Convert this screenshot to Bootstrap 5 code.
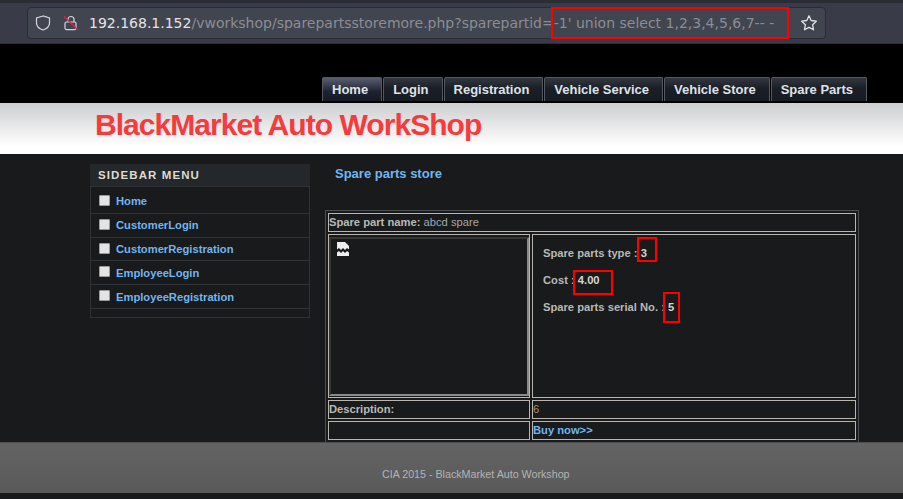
<!DOCTYPE html>
<html lang="en">
  <head>
    <meta charset="UTF-8" />
    <meta name="viewport" content="width=device-width, initial-scale=1.0" />
    <title>BlackMarket Auto WorkShop</title>
    <link
      href="https://cdn.jsdelivr.net/npm/bootstrap@5.3.0/dist/css/bootstrap.min.css"
      rel="stylesheet"
    />
    <script src="https://cdn.jsdelivr.net/npm/bootstrap@5.3.0/dist/js/bootstrap.bundle.min.js"></script>
    <style>
      body {
        background: #181a1c;
        color: #b9b9b4;
        font-family: "Liberation Sans", Arial, sans-serif;
        font-size: 11.2px;
        height: 499px;
        overflow: hidden;
        position: relative;
      }
      a {
        color: #72b5f0;
        text-decoration: none;
        font-weight: 700;
      }
      .browser-bar {
        height: 44px;
        background: #393c48;
        border-top: 3px solid #2b2d36;
        border-bottom: 1px solid #2b2d36;
        padding: 4px 0 0 27px;
      }
      .url-box {
        width: 799px;
        height: 32px;
        background: #41454f;
        border: 1px solid #2a2c35;
        border-radius: 4px;
        font-family: "DejaVu Sans", sans-serif;
        font-size: 14px;
        color: #8b8d96;
        white-space: nowrap;
      }
      .url-host {
        color: #e4e4e8;
      }
      .shield-icon {
        margin-left: 7px;
      }
      .lock-icon {
        margin-left: 12px;
        margin-right: 10px;
      }
      .star-icon {
        margin-left: 26px;
      }
      .top-strip {
        height: 59px;
        background: #000;
        padding: 33px 0 0 322px;
      }
      .tab-link {
        display: block;
        height: 24px;
        margin-right: 1px;
        padding: 0 13px 0 9px;
        line-height: 23px;
        font-size: 13px;
        color: #dfe3e8;
        background: linear-gradient(#33373f, #1a1e26 45%, #171b22);
        border: 1px solid #555a62;
        border-bottom: 0;
        border-radius: 2px 2px 0 0;
      }
      .tab-link.active {
        background: linear-gradient(#5a5f70, #1c2230 60%, #171b25);
      }
      .title-band {
        height: 51px;
        background: linear-gradient(#cdced0, #fff 85%);
        padding-left: 95px;
      }
      .title-band h1 {
        margin: 0;
        color: #f83a3c;
        font-family: "Liberation Sans", sans-serif;
        font-size: 30px;
        font-weight: 700;
        line-height: 44px;
        letter-spacing: -0.95px;
      }
      .page-body {
        height: 288px;
        padding: 10px 0 0 90px;
      }
      .side-menu {
        width: 220px;
        height: 154px;
        padding-top: 3px;
        border: 1px solid #303335;
        border-top: 0;
      }
      .side-title {
        height: 23px;
        margin: -3px -1px 3px;
        padding-left: 8px;
        background: #25282a;
        border-bottom: 1px solid #303335;
        color: #dcdcd6;
        font-size: 11.5px;
        font-weight: 700;
        line-height: 22px;
        letter-spacing: 1.1px;
      }
      .side-item {
        height: 23.8px;
        padding-left: 8px;
        border-bottom: 1px solid #303335;
        line-height: 22px;
      }
      .side-item a {
        padding-top: 0.4px;
      }
      .side-check {
        width: 11px;
        height: 11px;
        background: #e4e4e4;
        border: 1px solid #9a9a9a;
        border-radius: 1px;
        margin: 5px 6px 0 0;
      }
      .main-col {
        width: 534px;
        margin-left: 15px;
      }
      .main-col h2 {
        margin: 3px 0 0 10px;
        color: #72b5f0;
        font-family: "Liberation Sans", sans-serif;
        font-size: 13px;
        font-weight: 700;
        line-height: 14px;
        height: 43px;
      }
      .part-table {
        width: 534px;
        table-layout: fixed;
        border-collapse: separate;
        border-spacing: 2px;
        border: 1px solid #4c4f52;
      }
      .image-col {
        width: 202px;
      }
      .part-table td {
        border: 1px solid #b8b6ae;
        padding: 0;
        height: 19px;
        vertical-align: middle;
      }
      .part-table td.image-cell {
        height: 164px;
        padding: 0;
      }
      .image-box {
        height: 159px;
        border: 2px inset #8a8a88;
        padding: 3px 0 0 6px;
      }
      .part-facts {
        height: 162px;
        padding: 11px 0 0 10px;
      }
      .part-facts p {
        margin: 0 0 12px;
        line-height: 15px;
        font-weight: 700;
      }
      .fact-value {
        color: #d6d6d1;
      }
      .tan-text {
        color: #a8906f;
      }
      .name-value {
        color: #a5a8aa;
      }
      .page-footer {
        height: 51px;
        background: linear-gradient(#636363, #5a5a5a);
        border-top: 1px solid #4e5052;
        padding: 24px 0 0 382px;
        color: #b4b4b4;
        font-size: 10.7px;
        line-height: 14px;
      }
      .red-box {
        position: absolute;
        border: 2px solid #f00;
      }
      .red-url {
        left: 551px;
        top: 7px;
        width: 238px;
        height: 32px;
      }
      .red-type {
        left: 637px;
        top: 237px;
        width: 20px;
        height: 25px;
      }
      .red-cost {
        left: 573px;
        top: 270px;
        width: 40px;
        height: 25px;
      }
      .red-serial {
        left: 663px;
        top: 292px;
        width: 17px;
        height: 31px;
      }
    </style>
  </head>
  <body>
    <div class="browser-bar">
      <div class="url-box d-flex align-items-center">
        <svg class="shield-icon" width="16" height="16" viewBox="0 0 16 16" fill="none" stroke="#d4d5da" stroke-width="1.2">
          <path d="M8 1 1.500 3v5c0 3.600 2.800 5.800 6.500 7 3.700-1.200 6.500-3.400 6.500-7V3z" />
        </svg>
        <svg class="lock-icon" width="16" height="16" viewBox="0 0 16 16" fill="none">
          <path d="M5 7V4.500a3 3 0 0 1 6 0V7" stroke="#d4d5da" stroke-width="1.200" />
          <rect x="2" y="7" width="11" height="7.600" rx="1.500" stroke="#d4d5da" stroke-width="1.200" />
          <path d="M1 1.500 15 15" stroke="#e0234e" stroke-width="1.300" />
        </svg>
        <span><span class="url-host">192.168.1.152</span>/vworkshop/sparepartsstoremore.php?sparepartid=-1' union select 1,2,3,4,5,6,7-- -</span>
        <svg class="star-icon" width="18" height="18" viewBox="0 0 18 18" fill="none" stroke="#e2e3e8" stroke-width="1.300">
          <path d="m9 1.800 2.200 4.700 5.100.700-3.700 3.500.9 5.100L9 13.400l-4.500 2.400.9-5.100-3.700-3.500 5.100-.7z" stroke-linejoin="round" />
        </svg>
      </div>
    </div>

    <div class="top-strip d-flex">
      <a class="tab-link active" href="#">Home</a>
      <a class="tab-link" href="#">Login</a>
      <a class="tab-link" href="#">Registration</a>
      <a class="tab-link" href="#">Vehicle Service</a>
      <a class="tab-link" href="#">Vehicle Store</a>
      <a class="tab-link" href="#">Spare Parts</a>
    </div>

    <div class="title-band">
      <h1>BlackMarket Auto WorkShop</h1>
    </div>

    <div class="page-body d-flex align-items-start">
      <div class="side-menu">
        <div class="side-title">SIDEBAR MENU</div>
        <div class="side-item d-flex"><span class="side-check"></span><a href="#">Home</a></div>
        <div class="side-item d-flex"><span class="side-check"></span><a href="#">CustomerLogin</a></div>
        <div class="side-item d-flex"><span class="side-check"></span><a href="#">CustomerRegistration</a></div>
        <div class="side-item d-flex"><span class="side-check"></span><a href="#">EmployeeLogin</a></div>
        <div class="side-item d-flex"><span class="side-check"></span><a href="#">EmployeeRegistration</a></div>
      </div>
      <div class="main-col">
        <h2>Spare parts store</h2>
        <table class="part-table">
          <colgroup>
            <col class="image-col" />
            <col />
          </colgroup>
          <tr>
            <td colspan="2"><b>Spare part name:</b> <span class="name-value">abcd spare</span></td>
          </tr>
          <tr>
            <td class="image-cell">
              <div class="image-box">
                <svg class="d-block" width="12" height="14" viewBox="0 0 12 14">
                  <path d="M0 0h8l4 4v3.500l-2 -1.500-2 2-2-2-2 2-2-2-2 1.500z" fill="#eee" />
                  <path d="M0 10.500l2-1.500 2 2 2-2 2 2 2-2 2 1.500V14H0z" fill="#eee" />
                </svg>
              </div>
            </td>
            <td class="image-cell">
              <div class="part-facts">
                <p>Spare parts type : <span class="fact-value">3</span></p>
                <p>Cost : <span class="fact-value">4.00</span></p>
                <p>Spare parts serial No. : <span class="fact-value">5</span></p>
              </div>
            </td>
          </tr>
          <tr>
            <td><b>Description:</b></td>
            <td class="tan-text">6</td>
          </tr>
          <tr>
            <td></td>
            <td><a href="#">Buy now&gt;&gt;</a></td>
          </tr>
        </table>
      </div>
    </div>

    <div class="page-footer">CIA 2015 - BlackMarket Auto Workshop</div>

    <div class="red-box red-url"></div>
    <div class="red-box red-type"></div>
    <div class="red-box red-cost"></div>
    <div class="red-box red-serial"></div>
  </body>
</html>
